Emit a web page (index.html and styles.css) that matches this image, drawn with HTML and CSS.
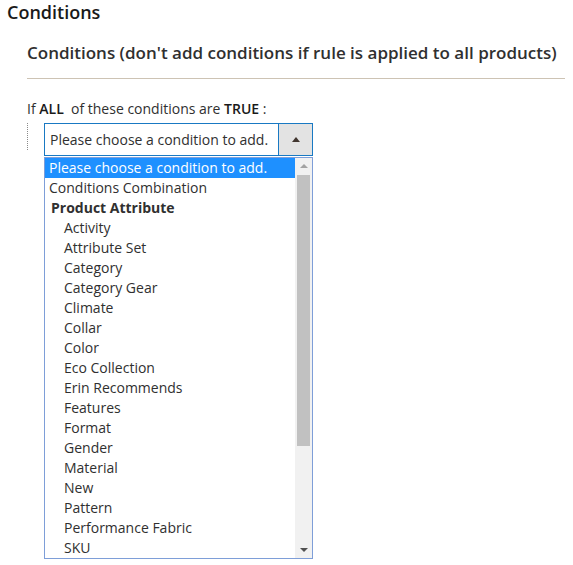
FILE: index.html
```html
<!DOCTYPE html>
<html>
<head>
<meta charset="utf-8">
<link rel="stylesheet" href="styles.css">
</head>
<body>
<div class="page">
  <h1 class="title">Conditions</h1>
  <div class="section">
    <h2 class="subtitle">Conditions (don't add conditions if rule is applied to all products)</h2>
    <p class="rule-text">If <b>ALL</b>&nbsp; of these conditions are <b>TRUE</b> :</p>
    <div class="rule-row">
      <span class="dots"></span>
      <div class="combo">
        <div class="select">
          <span class="select-value">Please choose a condition to add.</span>
          <span class="select-btn"><span class="tri-up"></span></span>
        </div>
        <div class="list">
          <div class="options">
            <div class="opt selected">Please choose a condition to add.</div>
            <div class="opt">Conditions Combination</div>
            <div class="opt group">Product Attribute</div>
            <div class="opt sub">Activity</div>
            <div class="opt sub">Attribute Set</div>
            <div class="opt sub">Category</div>
            <div class="opt sub">Category Gear</div>
            <div class="opt sub">Climate</div>
            <div class="opt sub">Collar</div>
            <div class="opt sub">Color</div>
            <div class="opt sub">Eco Collection</div>
            <div class="opt sub">Erin Recommends</div>
            <div class="opt sub">Features</div>
            <div class="opt sub">Format</div>
            <div class="opt sub">Gender</div>
            <div class="opt sub">Material</div>
            <div class="opt sub">New</div>
            <div class="opt sub">Pattern</div>
            <div class="opt sub">Performance Fabric</div>
            <div class="opt sub">SKU</div>
          </div>
          <div class="scrollbar">
            <span class="arrow-up"></span>
            <span class="thumb"></span>
            <span class="arrow-down"></span>
          </div>
        </div>
      </div>
    </div>
  </div>
</div>
</body>
</html>
```

FILE: styles.css
```css
* { box-sizing: border-box; }
html, body { margin: 0; padding: 0; background: #fff; }
body {
  font-family: "Open Sans", "DejaVu Sans", sans-serif;
  color: #303030;
}
.page { padding: 0 0 0 7px; }
.title {
  margin: 0;
  font-size: 18px;
  font-weight: 600;
  line-height: 24px;
  color: #1a1a1a;
}
.section { padding-left: 20px; width: 558px; }
.subtitle {
  margin: 17px 0 0 0;
  font-size: 17px;
  font-weight: 600;
  line-height: 24px;
  color: #303030;
  padding-bottom: 13px;
  border-bottom: 1px solid #cdc3b4;
}
.rule-text {
  margin: 20px 0 0 0;
  font-size: 14px;
  line-height: 20px;
  color: #303030;
}
.rule-text b { font-weight: 600; color: #1a1a1a; }
.rule-row {
  display: flex;
  align-items: flex-start;
  margin-top: 4px;
}
.dots {
  width: 1px;
  height: 27px;
  border-left: 1px dotted #8a8a8a;
  margin-right: 16px;
}
.combo { width: 269px; }
.select {
  display: flex;
  height: 33px;
  border: 1px solid #1979c3;
  background: #fff;
}
.select-value {
  flex: 1;
  padding-left: 5px;
  font-size: 14px;
  line-height: 31px;
  color: #303030;
}
.select-btn {
  width: 34px;
  border-left: 1px solid #1979c3;
  background: #e3e3e3;
  display: flex;
  align-items: center;
  justify-content: center;
}
.tri-up {
  width: 0; height: 0;
  border-left: 4px solid transparent;
  border-right: 4px solid transparent;
  border-bottom: 5px solid #41362f;
}
.list {
  margin-top: 1px;
  display: flex;
  height: 402px;
  border: 1px solid #7e9ed8;
  overflow: hidden;
}
.options { flex: 1; }
.opt {
  height: 20px;
  font-size: 14px;
  line-height: 20px;
  padding-left: 4px;
  white-space: nowrap;
  color: #303030;
}
.opt.selected { background: #1e90ff; color: #fff; }
.opt.group { font-weight: 700; padding-left: 6px; }
.opt.sub { padding-left: 19px; }
.scrollbar {
  width: 17px;
  background: #f1f1f1;
  display: flex;
  flex-direction: column;
  align-items: center;
}
.arrow-up {
  margin-top: 6px;
  width: 0; height: 0;
  border-left: 4px solid transparent;
  border-right: 4px solid transparent;
  border-bottom: 4px solid #a3a3a3;
}
.thumb {
  margin-top: 7px;
  width: 13px;
  height: 271px;
  background: #c1c1c1;
}
.arrow-down {
  margin-top: auto;
  margin-bottom: 6px;
  width: 0; height: 0;
  border-left: 4px solid transparent;
  border-right: 4px solid transparent;
  border-top: 4px solid #505050;
}
```
